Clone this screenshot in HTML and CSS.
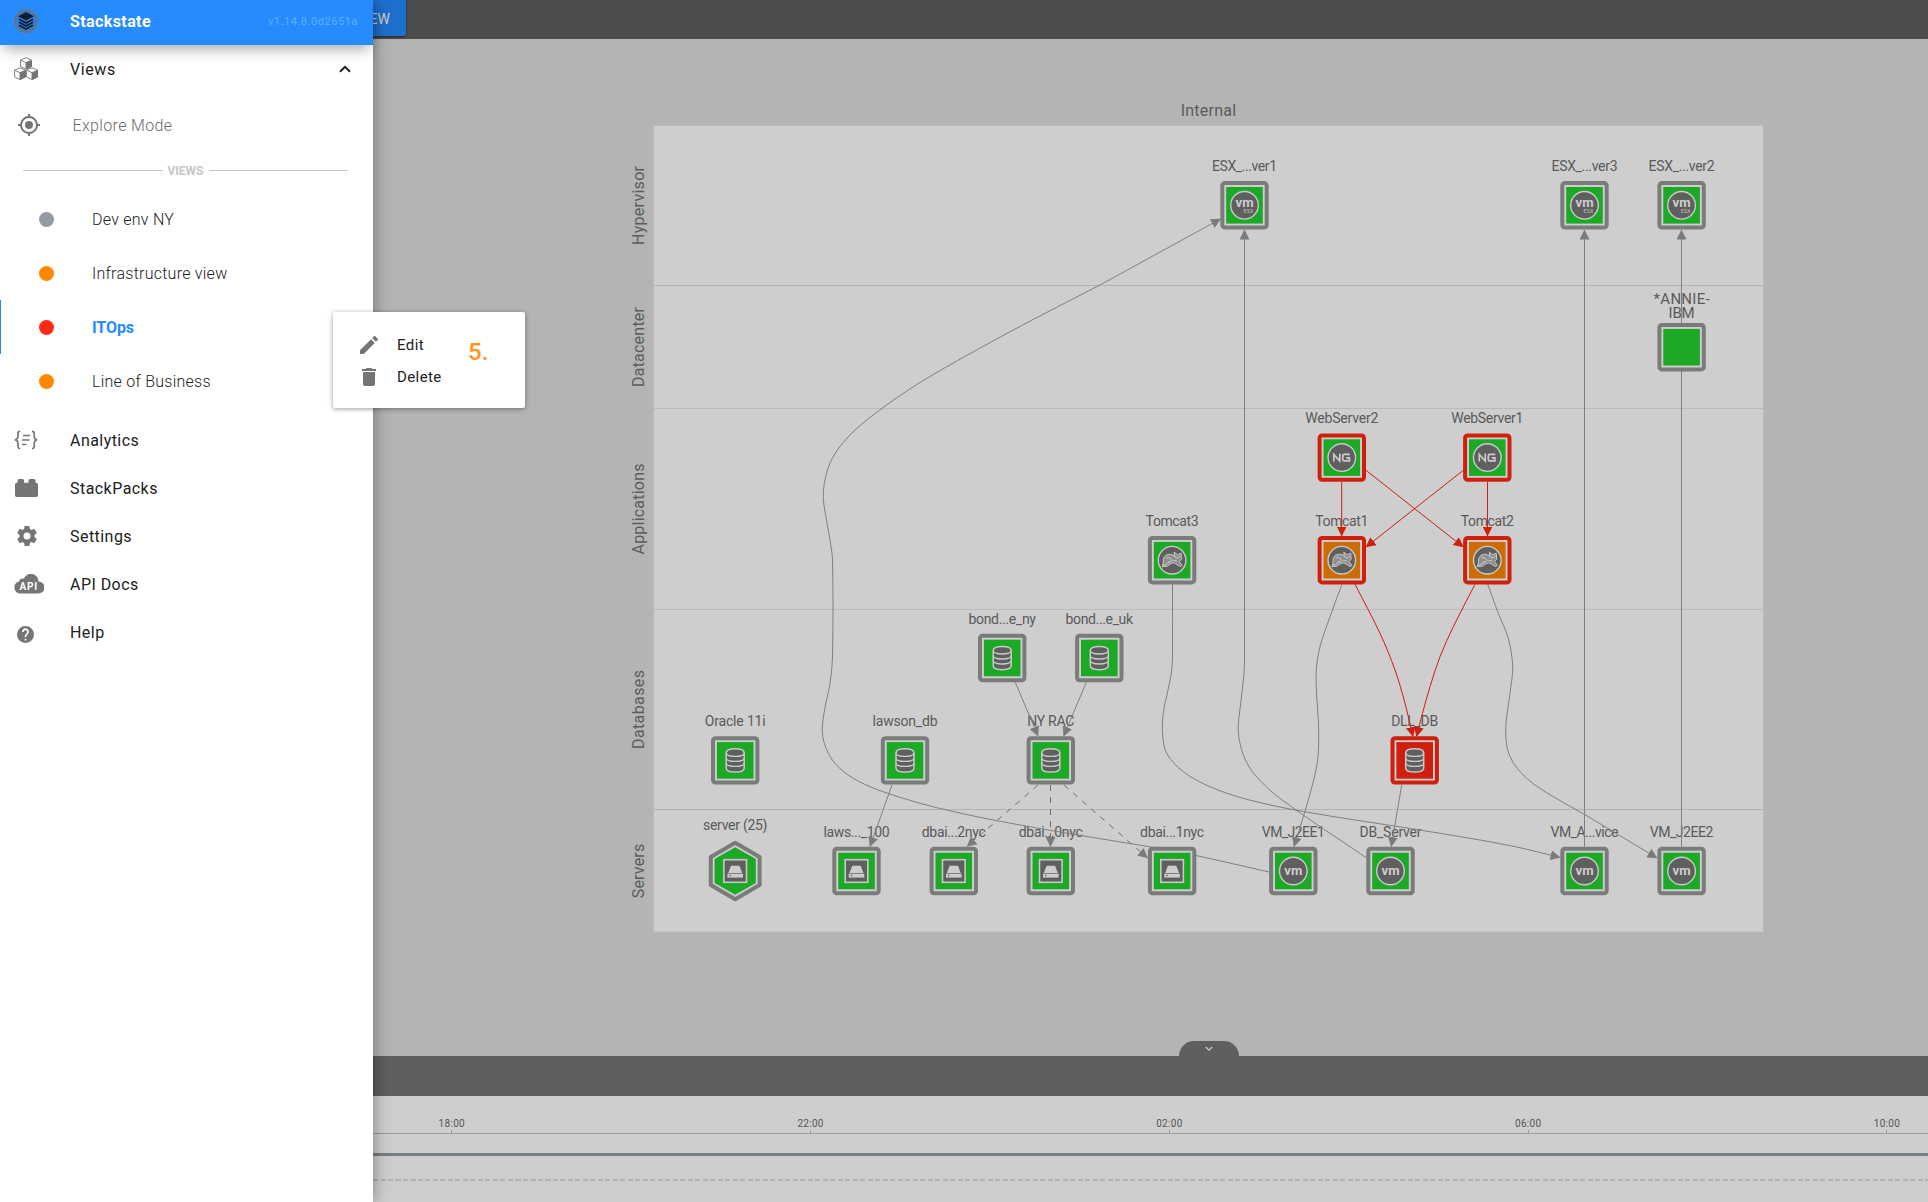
FILE: index.html
```html
<!DOCTYPE html>
<html lang="en">
<head>
<meta charset="utf-8">
<title>Stackstate</title>
<link rel="stylesheet" href="styles.css">
</head>
<body>
<div class="app">
  <aside class="sidebar">
    <header class="brand">
      <svg class="brand-icon" width="24" height="24" viewBox="0 0 24 24">
        <circle cx="12" cy="12" r="11" fill="#2a80e0" stroke="#66747f" stroke-width="2"/>
        <path d="M12 3 20 7.2 12 11.4 4 7.2z" fill="#0b1c2e"/>
        <path d="M5 10.2 12 14l7-3.800M5 13.200 12 17l7-3.800M5 16.200 12 20l7-3.800" fill="none" stroke="#0b1c2e" stroke-width="1.800"/>
      </svg>
      <span class="brand-name">Stackstate</span>
      <span class="version">v1.14.8.0d2651a</span>
    </header>
    <nav>
      <div class="item item-views">
        <svg class="icon" width="24" height="24" viewBox="0 0 24 24" fill="#fff" stroke="#757575" stroke-width=".9" stroke-linejoin="round">
          <path d="M6.500 3.200 12 .7l5.500 2.500v6.300L12 12 6.500 9.500zM.6 13.200 6 10.800l5.600 2.400v6.600L6 22.600.6 20zM12.400 13.200 18 10.800l5.500 2.400V20L18 22.600l-5.600-2.800z"/>
          <path d="M12 5.700 17.500 3.200v6.300L12 12zM6 15.700l5.600-2.500v6.600L6 22.600zM18 15.700l5.500-2.500V20L18 22.600z" fill="#757575"/>
          <path d="M6.500 3.200 12 5.700M.6 13.200 6 15.700M12.400 13.200 18 15.700"/>
        </svg>
        <span class="label">Views</span>
        <svg class="chevron" width="12" height="8" viewBox="0 0 12 8"><path d="M1 6.800 6 1.800l5 5" fill="none" stroke="#212121" stroke-width="2"/></svg>
      </div>
      <div class="item item-explore">
        <svg class="icon" width="22" height="22" viewBox="1 1 22 22" fill="#757575"><path d="M12 8a4 4 0 1 0 0 8 4 4 0 0 0 0-8zm8.940 3A9 9 0 0 0 13 3.060V1h-2v2.060A9 9 0 0 0 3.060 11H1v2h2.060A9 9 0 0 0 11 20.940V23h2v-2.060A9 9 0 0 0 20.940 13H23v-2zM12 19a7 7 0 1 1 0-14 7 7 0 0 1 0 14z"/></svg>
        <span class="label">Explore Mode</span>
      </div>
      <div class="divider"><span>VIEWS</span></div>
      <div class="view"><i class="dot"></i><span>Dev env NY</span></div>
      <div class="view"><i class="dot orange"></i><span>Infrastructure view</span></div>
      <div class="view active"><i class="dot red"></i><span>ITOps</span></div>
      <div class="view"><i class="dot orange"></i><span>Line of Business</span></div>
      <div class="item first">
        <svg class="icon" width="24" height="20" viewBox="0 0 24 20" fill="none" stroke="#757575" stroke-width="1.700"><path d="M6.200 1.300C3.600 1.300 4 3 4 5.500S3.400 9.700.8 9.900C3.400 10 4 11.500 4 14s-.4 4.600 2.200 4.600M18 1.300c2.600 0 2.200 1.700 2.200 4.200s.6 4.200 3 4.400c-2.400.1-3 1.600-3 4.100s.4 4.600-2.200 4.600M9 5.500h7M8 10h7.500M8 14.500h4.500"/></svg>
        <span class="label">Analytics</span>
      </div>
      <div class="item">
        <svg class="icon" width="24" height="20" viewBox="0 0 24 20" fill="#757575"><path d="M3.500 5V2.500Q3.500 1 5 1h3.500q1.500 0 1.500 1.500V5zM14.500 5V2.500Q14.500 1 16 1h4q1.500 0 1.500 1.500V5z"/><rect x="1" y="4.800" width="23" height="14.200" rx="1.700"/></svg>
        <span class="label">StackPacks</span>
      </div>
      <div class="item">
        <svg class="icon gear" width="20" height="20" viewBox="2 2 20 20" fill="#757575"><path d="M19.430 12.980c.04-.32.070-.64.070-.98s-.03-.66-.07-.98l2.110-1.650c.19-.15.24-.42.120-.64l-2-3.460c-.12-.22-.39-.3-.61-.22l-2.490 1c-.52-.4-1.080-.73-1.690-.98l-.38-2.650A.49.49 0 0 0 14 2h-4c-.25 0-.46.180-.49.420l-.38 2.650c-.61.250-1.170.590-1.690.980l-2.490-1c-.23-.09-.49 0-.61.220l-2 3.460c-.13.220-.07.490.12.640l2.110 1.650c-.04.320-.07.650-.07.980s.03.660.070.980l-2.110 1.650c-.19.150-.24.420-.12.640l2 3.460c.12.220.39.300.61.220l2.490-1c.52.400 1.080.730 1.690.980l.38 2.650c.03.240.24.420.49.420h4c.25 0 .46-.18.490-.42l.38-2.650c.61-.25 1.170-.59 1.690-.98l2.490 1c.23.090.49 0 .61-.22l2-3.460c.12-.22.070-.49-.12-.64zM12 15.500a3.500 3.500 0 1 1 0-7 3.500 3.500 0 0 1 0 7z"/></svg>
        <span class="label">Settings</span>
      </div>
      <div class="item">
        <svg class="icon" width="30" height="20" viewBox="0 0 30 20"><path d="M6 19.500a6 6 0 0 1-1.400-11.700A5 5 0 0 1 10 4.500 7.600 7.600 0 0 1 24.600 7.500 6 6 0 0 1 24.500 19.500z" fill="#757575"/><text class="api" x="14.600" y="16" textLength="18">API</text></svg>
        <span class="label">API Docs</span>
      </div>
      <div class="item">
        <svg class="icon help" width="17" height="17" viewBox="2 2 20 20" fill="#757575"><path d="M12 2a10 10 0 1 0 0 20 10 10 0 0 0 0-20zm1 17h-2v-2h2zm2.070-7.750-.9.920C13.450 12.900 13 13.500 13 15h-2v-.5c0-1.100.45-2.100 1.170-2.830l1.240-1.260A2 2 0 1 0 10 9H8a4 4 0 1 1 7.070 2.250z"/></svg>
        <span class="label">Help</span>
      </div>
    </nav>
  </aside>

  <main class="main">
    <div class="topbar"><button class="view-btn">EW</button></div>
    <svg class="graph" width="1555" height="1017" viewBox="373 39 1555 1017">
      <defs>
        <marker id="arrow" viewBox="0 0 10 10" refX="9.500" refY="5" markerWidth="10" markerHeight="10" markerUnits="userSpaceOnUse" orient="auto"><path d="M0 0 10 5 0 10z" fill="#7b7b7b"/></marker>
        <marker id="arrow-red" viewBox="0 0 10 10" refX="9.500" refY="5" markerWidth="10" markerHeight="10" markerUnits="userSpaceOnUse" orient="auto"><path d="M0 0 10 5 0 10z" fill="#cd200e"/></marker>
        <g id="disc"><circle r="13.800" fill="#5f5f5f" stroke="#c9c9c9" stroke-width="1.400"/></g>
        <g id="vm"><use href="#disc"/><text class="vm" y="4.200" textLength="18" lengthAdjust="spacingAndGlyphs">vm</text></g>
        <g id="esx"><use href="#disc"/><text class="vm" y="2" textLength="18" lengthAdjust="spacingAndGlyphs">vm</text><text class="esx" x="4" y="7.300">ESX</text></g>
        <g id="ng"><use href="#disc"/><path d="M-8 4V-3.200L-2 3.400V-4M8 -3.200H2.400Q1 -3.200 1 -1.800V1.800Q1 3.200 2.400 3.200H7.600V.3H4.400" fill="none" stroke="#cdcdcd" stroke-width="1.700"/></g>
        <g id="tomcat"><use href="#disc"/><path d="M-8.500-2q1.500-4 6-4 3 0 5 2l-.5-4 3.500 2.500L9-7l.3 6-2 2.500L10 5l-1.500 1.500-5-3-2.500-1-3 1.500-3 2-5 .5 1-3.500z" fill="#8e8e8e" stroke="#c9c9c9" stroke-width="1"/><path d="M-6-2q3-2 5 1t-3 3M2-4l3 2 3-2M1 0l4 1M-9 5q4 0 6-4" fill="none" stroke="#dadada" stroke-width=".8"/></g>
        <g id="db"><path d="M-9-7.500v15C-9 13 9 13 9 7.500v-15C9-13-9-13-9-7.500z" fill="#5f5f5f" stroke="#c9c9c9" stroke-width="1.500"/><path d="M-9-7.500c0 4.600 18 4.600 18 0M-9-2.500c0 4.600 18 4.600 18 0M-9 2.500c0 4.600 18 4.600 18 0" fill="none" stroke="#c9c9c9" stroke-width="1.400"/></g>
        <g id="disk"><rect x="-11.300" y="-11.300" width="22.600" height="22.600" fill="#5f5f5f" stroke="#c9c9c9" stroke-width="1.600"/><path d="M-4.200-5.300h8.400L7 1.900H-7z" fill="#cdcdcd"/><path d="M-7.800 2.700h15.600v3.900h-15.600z" fill="#cdcdcd"/><circle cx="-5" cy="4.600" r=".8" fill="#5f5f5f"/></g>
      </defs>
      <rect x="653.500" y="125.500" width="1110" height="806.500" fill="#cecece" stroke="#bababa"/>
      <path d="M654 285.500h1109M654 809.500h1109" stroke="#b2b2b2"/>
      <path d="M654 408.500h1109M654 609.500h1109" stroke="#bababa"/>
      <g id="lanes" class="lane"></g>
      <g id="labels" class="node-label"></g>
      <g id="edges" class="edges"></g>
      <g id="nodes"></g>
    </svg>
    <div class="bar"><div class="tab"><svg width="8" height="6" viewBox="0 0 8 6"><path d="M.8 1 4 4.200 7.200 1" fill="none" stroke="#cdcdcd" stroke-width="1.200"/></svg></div></div>
    <section class="timeline">
      <div class="axis"><span>18:00</span><span>22:00</span><span>02:00</span><span>06:00</span><span>10:00</span></div>
      <div class="health"></div>
      <div class="events"></div>
    </section>
  </main>

  <div class="popup">
    <div class="actions">
      <div class="action"><svg width="18" height="18" viewBox="3 3 18 18" fill="#757575"><path d="M3 17.250V21h3.750L17.810 9.940l-3.750-3.750zM20.710 7.040a1 1 0 0 0 0-1.410l-2.340-2.340a1 1 0 0 0-1.410 0l-1.830 1.830 3.750 3.750z"/></svg><span>Edit</span></div>
      <div class="action"><svg width="18" height="18" viewBox="3 3 18 18" fill="#757575"><path d="M6 19a2 2 0 0 0 2 2h8a2 2 0 0 0 2-2V7H6zM19 4h-3.500l-1-1h-5l-1 1H5v2h14z"/></svg><span>Delete</span></div>
    </div>
    <strong class="step">5.</strong>
  </div>
</div>
<script src="graph.js"></script>
</body>
</html>
```

FILE: graph.js
```js
const NS = 'http://www.w3.org/2000/svg';
const GREY = '#7b7b7b', RED = '#cd200e', GREEN = '#1ba926', ORANGE = '#cb6c05';

function add(parent, tag, attrs, text) {
  const el = document.createElementNS(NS, tag);
  for (const k in attrs) el.setAttribute(k, attrs[k]);
  if (text) el.textContent = text;
  document.getElementById(parent).appendChild(el);
}

// name, label width, x, y, icon, border, fill
const nodes = [
  ['ESX_...ver1', 65, 1244.5, 205.3, 'esx', GREY, GREEN],
  ['ESX_...ver3', 66, 1584.5, 205.3, 'esx', GREY, GREEN],
  ['ESX_...ver2', 66, 1681.6, 205.3, 'esx', GREY, GREEN],
  ['', 0, 1681.6, 347.2, '', GREY, GREEN],
  ['WebServer2', 73, 1341.8, 457.6, 'ng', RED, GREEN],
  ['WebServer1', 72, 1487.3, 457.6, 'ng', RED, GREEN],
  ['Tomcat3', 53, 1172.1, 560.2, 'tomcat', GREY, GREEN],
  ['Tomcat1', 53, 1341.8, 560.2, 'tomcat', RED, ORANGE],
  ['Tomcat2', 53, 1487.3, 560.2, 'tomcat', RED, ORANGE],
  ['bond...e_ny', 67.5, 1002.2, 658, 'db', GREY, GREEN],
  ['bond...e_uk', 67.5, 1099.3, 658, 'db', GREY, GREEN],
  ['Oracle 11i', 61, 735.2, 760.4, 'db', GREY, GREEN],
  ['lawson_db', 65, 905, 760.4, 'db', GREY, GREEN],
  ['NY RAC', 47, 1050.8, 760.4, 'db', GREY, GREEN],
  ['DLL_DB', 47, 1414.7, 760.4, 'db', RED, RED],
  ['laws..._100', 66, 856.5, 871, 'disk', GREY, GREEN],
  ['dbai...2nyc', 64, 953.8, 871, 'disk', GREY, GREEN],
  ['dbai...0nyc', 64, 1050.8, 871, 'disk', GREY, GREEN],
  ['dbai...1nyc', 64, 1172.1, 871, 'disk', GREY, GREEN],
  ['VM_J2EE1', 63, 1293.3, 871, 'vm', GREY, GREEN],
  ['DB_Server', 62, 1390.5, 871, 'vm', GREY, GREEN],
  ['VM_A...vice', 68, 1584.5, 871, 'vm', GREY, GREEN],
  ['VM_J2EE2', 63.5, 1681.6, 871, 'vm', GREY, GREEN]
];

function label(text, w, x, y, size) {
  add('labels', 'text', { x, y, textLength: w, 'font-size': size || 14 }, text);
}

for (const [name, w, x, y, icon, border, fill] of nodes) {
  if (name) label(name, w, x, y - 34.5);
  add('nodes', 'rect', { x: x - 22.2, y: y - 22.2, width: 44.4, height: 44.4, rx: 2.5, fill: '#cecece', stroke: border, 'stroke-width': 4 });
  add('nodes', 'rect', { x: x - 18.3, y: y - 18.3, width: 36.6, height: 36.6, fill });
  if (icon) add('nodes', 'use', { href: '#' + icon, x, y });
}
label('*ANNIE-', 56, 1681.6, 304, 15);
label('IBM', 26, 1681.6, 318, 15);
label('server (25)', 64.5, 735.2, 829.8);

const hexagon = r => [0, 1, 2, 3, 4, 5].map(i => {
  const a = Math.PI / 3 * i - Math.PI / 2;
  return (735.2 + r * Math.cos(a)).toFixed(2) + ',' + (871 + r * Math.sin(a)).toFixed(2);
}).join(' ');
add('nodes', 'polygon', { points: hexagon(28.2), fill: '#cecece', stroke: GREY, 'stroke-width': 4, 'stroke-linejoin': 'round' });
add('nodes', 'polygon', { points: hexagon(23.8), fill: GREEN });
add('nodes', 'use', { href: '#disk', x: 735.2, y: 871 });

for (const [text, w, y] of [['Hypervisor', 79, 205.5], ['Datacenter', 80, 347], ['Applications', 91, 509], ['Databases', 79, 709.5], ['Servers', 54.5, 871]])
  add('lanes', 'text', { transform: `translate(644 ${y}) rotate(-90)`, textLength: w }, text);
add('lanes', 'text', { x: 1208.4, y: 116, textLength: 55.5 }, 'Internal');

// Smooth line through every way point of an edge.
function spline(p) {
  if (p.length === 2) return `M${p[0]}L${p[1]}`;
  let d = `M${p[0]}`;
  for (let i = 0; i < p.length - 1; i++) {
    const a = p[i - 1] || p[i], b = p[i], c = p[i + 1], e = p[i + 2] || c;
    const len = Math.hypot(c[0] - b[0], c[1] - b[1]);
    const tan = (s, t) => {
      const l = Math.hypot(t[0] - s[0], t[1] - s[1]);
      return [(t[0] - s[0]) / l * len / 3, (t[1] - s[1]) / l * len / 3];
    };
    const m = tan(a, c), n = tan(b, e);
    d += `C${b[0] + m[0]},${b[1] + m[1]} ${c[0] - n[0]},${c[1] - n[1]} ${c}`;
  }
  return d;
}

const edges = [
  ['', [[1269,872],[1196,855.5],[1150.4,846.9],[1079,835.2],[996.7,820.7],[936.7,807.7],[900,797.3],[870,786.7],[848.3,775],[832.3,760],[822.7,736.7],[824,713.3],[830,683.3],[832.5,656],[832.5,560],[830,540],[825.3,513.3],[823.3,496.7],[825.3,478.3],[832.3,458.3],[846,439.3],[866.7,420],[908.3,390],[957.3,360.7],[1033,319.5],[1098,286],[1151,257],[1220.5,219]]],
  ['', [[1366,857.5],[1280,798.5],[1255,775],[1244.7,758.3],[1239.3,740],[1238.3,725],[1240.7,703.3],[1244,673.3],[1244.5,656],[1244.5,230]]],
  ['', [[1172.5,584],[1172.5,655],[1171.5,672],[1168,690],[1163.3,713.3],[1162.7,735],[1166.7,753.3],[1183.3,771.7],[1210,786.7],[1246.7,799.3],[1303.3,811.5],[1413.3,829],[1480,840],[1520,847.7],[1560,857.5]]],
  ['', [[1341.7,585],[1330,616.7],[1320,646.7],[1316.3,670],[1316.7,696.7],[1318.5,723.3],[1318,756.7],[1313.3,781.7],[1303.3,816.7],[1294,846.5]]],
  ['', [[1487.7,584.3],[1498.3,613.3],[1508.3,638.3],[1512.7,666.7],[1510,693.3],[1505.7,730],[1510,756.7],[1526.7,778.3],[1553.3,796.7],[1584.3,814.3],[1630,841.7],[1657,858]]],
  ['', [[1401.7,785],[1391.2,846.5]]],
  ['', [[1584.5,846.5],[1584.5,230]]],
  ['plain', [[1681.5,846.5],[1681.5,371]]],
  ['', [[1681.5,323],[1681.5,230]]],
  ['', [[1015.3,682.3],[1038,736]]],
  ['', [[1086.3,682.3],[1063.7,736]]],
  ['', [[892,785],[870,846.5]]],
  ['dashed', [[1038,785],[967,846.5]]],
  ['dashed', [[1050.5,785],[1050.5,846.5]]],
  ['dashed', [[1064,785],[1147.5,858]]],
  ['red', [[1341.7,482],[1341.7,536]]],
  ['red', [[1487.5,482],[1487.5,536]]],
  ['red', [[1366,470.3],[1463.3,547]]],
  ['red', [[1463.3,470.3],[1366,547]]],
  ['red', [[1355,584.3],[1380,633.3],[1395,670],[1405,703.3],[1413,736.5]]],
  ['red', [[1475,584.3],[1453.3,626.7],[1440,656.7],[1430,686.7],[1422.5,713.3],[1416.5,736.5]]]
];
for (const [kind, pts] of edges) {
  const attrs = { d: spline(pts), class: kind };
  if (kind !== 'plain') attrs['marker-end'] = kind === 'red' ? 'url(#arrow-red)' : 'url(#arrow)';
  add('edges', 'path', attrs);
}
```

FILE: styles.css
```css
* { box-sizing: border-box; }
body {
  margin: 0;
  font-family: Roboto, "Liberation Sans", sans-serif;
  color: #212121;
  overflow: hidden;
}
.app { position: relative; display: flex; width: 1928px; height: 1202px; background: #b4b4b4; }

.sidebar { position: relative; z-index: 2; width: 373px; flex: none; background: #fff; box-shadow: 0 0 16px rgba(0, 0, 0, .4); }
.brand {
  display: flex; align-items: center; height: 45px; padding: 0 15px 3px 14px;
  background: #268bff; color: #fff; box-shadow: 0 8px 14px -4px rgba(0, 0, 0, .35);
}
.brand-name { margin-left: 32px; font-size: 16px; font-weight: 700; letter-spacing: .4px; }
.version { margin-left: auto; font-size: 11px; letter-spacing: .55px; color: #5eaeff; }

.item { display: grid; grid-template-columns: 56px 1fr auto; align-items: center; height: 48px; padding: 0 22px 0 14px; font-size: 16px; letter-spacing: .45px; }
.item-views { letter-spacing: .6px; }
.item-explore { grid-template-columns: 54.500px 1fr; height: 64px; font-weight: 300; color: #6c6c6c; padding-left: 18px; letter-spacing: .35px; }
.item.first { margin-top: 8px; }
.gear { margin-left: 3px; }
.help { margin: 4px 0 0 3px; }
.api { font: 700 10px Roboto, sans-serif; fill: #fff; text-anchor: middle; }

.divider { display: flex; align-items: center; gap: 5px; height: 27px; margin: 0 25px 8px 23px; color: #c6c6c6; font-size: 12px; font-weight: 700; }
.divider::before, .divider::after { content: ""; flex: 1; height: 1px; background: #c4c4c4; }
.view { display: flex; align-items: center; gap: 38px; height: 54px; padding-left: 39px; font-size: 16px; font-weight: 300; letter-spacing: .25px; }
.view.active { padding-left: 38px; border-left: 1px solid #268bff; color: #268bff; font-weight: 700; letter-spacing: -.1px; }
.dot { width: 15px; height: 15px; border-radius: 50%; background: #929ba3; }
.dot.orange { background: #ff8800; }
.dot.red { background: #ff2a15; }

.main { display: flex; flex-direction: column; width: 1555px; overflow: hidden; }
.topbar { height: 39px; background: #4d4d4d; }
.view-btn { display: block; width: 33px; height: 36px; padding: 2px 16px 0 0; border: 0; border-radius: 0 0 2px 0; background: #1e70cf; color: #cecece; font: 400 14px Roboto, sans-serif; direction: rtl; text-align: right; box-shadow: 0 1px 3px rgba(0, 0, 0, .5); }
.graph { display: block; }

.lane { font-size: 16px; fill: #5c5c5c; text-anchor: middle; }
.node-label { fill: #5a5a5a; text-anchor: middle; }
.edges path { fill: none; stroke: #808080; stroke-width: 1; }
.edges .red { stroke: #cd200e; }
.edges .dashed { stroke: #6e6e6e; stroke-dasharray: 6 6; }
.vm { font: 700 13.500px Roboto, sans-serif; fill: #cdcdcd; text-anchor: middle; }
.esx { font: 400 5.500px Roboto, sans-serif; fill: #bdbdbd; text-anchor: middle; }

.bar { position: relative; height: 40px; flex: none; background: #5f5f5f; }
.tab { position: absolute; left: 805.500px; top: -15px; display: flex; justify-content: center; width: 60px; height: 15px; padding-top: 5px; border-radius: 16px 16px 0 0; background: #5f5f5f; }
.timeline { flex: 1; background: #cecece; }
.axis { display: grid; grid-template-columns: repeat(5, 358.800px); height: 38px; margin-left: -100.600px; border-bottom: 1px solid #9c9c9c; }
.axis span { display: flex; flex-direction: column; align-items: center; padding-top: 21px; font-size: 10px; line-height: 13px; color: #555; letter-spacing: .3px; }
.axis span::after { content: ""; width: 1px; height: 3px; background: #999; }
.health { height: 3px; margin-top: 19px; background: #777e82; }
.events { height: 2px; margin-top: 23px; background: repeating-linear-gradient(90deg, #b2b2b2 0 5px, #cecece 5px 7.500px); }

.popup { position: absolute; z-index: 3; left: 333px; top: 312px; display: flex; width: 192px; height: 96px; padding: 17px 0 0 27px; border-radius: 2px; background: #fff; box-shadow: 0 1px 5px rgba(0, 0, 0, .4); }
.actions { width: 108px; }
.action { display: flex; align-items: center; gap: 19px; height: 32px; font-size: 15px; letter-spacing: .4px; }
.step { padding-top: 9px; font-size: 24px; font-weight: 500; color: #ff9420; }
```
